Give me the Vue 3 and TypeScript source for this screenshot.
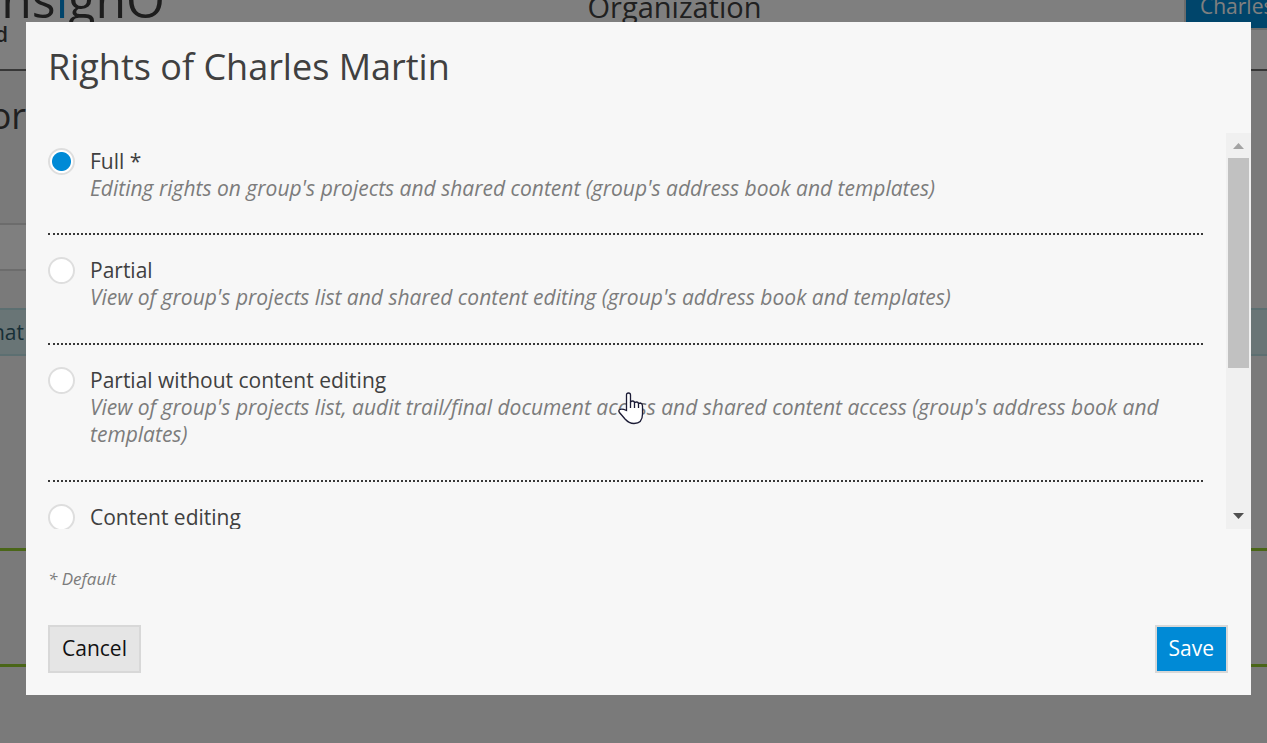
<script setup lang="ts">
import { ref } from 'vue'

interface Right {
  id: string
  label: string
  description?: string
}

const rights: Right[] = [
  { id: 'full', label: 'Full *', description: "Editing rights on group's projects and shared content (group's address book and templates)" },
  { id: 'partial', label: 'Partial', description: "View of group's projects list and shared content editing (group's address book and templates)" },
  { id: 'partial-view', label: 'Partial without content editing', description: "View of group's projects list, audit trail/final document access and shared content access (group's address book and templates)" },
  { id: 'content', label: 'Content editing' },
]

const selected = ref('full')
</script>

<template>
  <div class="screen">
    <div class="page">
      <header class="topbar">
        <div class="brand">
          <div class="logo">ns<span class="accent">i</span>gnO</div>
          <div class="tagline">d</div>
        </div>
        <div class="section">Organization</div>
        <button class="account" type="button">Charles</button>
      </header>
      <div class="heading">or</div>
      <div class="field"></div>
      <div class="notice"><span>hat</span></div>
      <div class="rule first"></div>
      <div class="rule"></div>
    </div>

    <div class="overlay">
      <form class="dialog" role="dialog" aria-labelledby="dialog-title" @submit.prevent>
        <h1 id="dialog-title">Rights of Charles Martin</h1>
        <div class="scroller">
          <div class="options">
            <div v-for="r in rights" :key="r.id" class="option">
              <input :id="r.id" v-model="selected" type="radio" name="right" :value="r.id" />
              <label :for="r.id">
                <span class="name">{{ r.label }}</span>
                <em v-if="r.description">{{ r.description }}</em>
              </label>
            </div>
          </div>
          <div class="scrollbar" aria-hidden="true">
            <svg class="arrow" viewBox="0 0 25 25"><path d="M7 16 L12.500 10 L18 16 Z" fill="#a3a3a3" /></svg>
            <div class="track"><div class="thumb"></div></div>
            <svg class="arrow" viewBox="0 0 25 25"><path d="M7 9 L12.500 15 L18 9 Z" fill="#505050" /></svg>
          </div>
        </div>
        <p class="note">* Default</p>
        <footer>
          <button class="btn" type="button">Cancel</button>
          <button class="btn primary" type="submit">Save</button>
        </footer>
      </form>
    </div>

    <svg class="pointer" viewBox="0 0 26 33" aria-hidden="true">
      <path d="M8.500 18 V3 Q8.500 1 10.500 1 Q12.500 1 12.500 3 V10.500 Q12.500 9 14.500 9 Q16.500 9 16.500 11 Q16.500 10 18.500 10 Q20.500 10 20.500 12 Q20.500 11 22.500 11 Q24.500 11.500 24.500 14 V22 Q24.500 31.500 16 31.500 Q11 31.500 7 27 L1.500 20.500 Q0 18.500 2 17.500 Q4 16.500 8.500 18.500 Z" fill="#fff" stroke="#1b1b35" stroke-width="1.300" />
      <path d="M12.500 10 V16 M16.500 11 V16 M20.500 12 V16" fill="none" stroke="#1b1b35" stroke-width="1.300" />
    </svg>
  </div>
</template>

<style>
body {
  margin: 0;
}
</style>

<style scoped>
.screen {
  position: relative;
  height: 100vh;
  min-height: 720px;
  overflow: hidden;
  font-family: "Open Sans", "Noto Sans", sans-serif;
  font-size: 21px;
  color: #404040;
  background: #f5f5f5;
}

.topbar {
  display: flex;
  justify-content: space-between;
  align-items: flex-start;
  box-sizing: border-box;
  height: 71px;
  overflow: hidden;
  border-bottom: 2px solid #6f6f6f;
  background: #fefefe;
}

.brand {
  width: 165px;
  height: 69px;
  display: flex;
  flex-direction: column;
}

.logo {
  display: flex;
  justify-content: flex-end;
  align-items: flex-end;
  height: 24px;
  font-size: 50px;
  line-height: 50px;
  color: #3a3a3a;
}

.accent {
  color: #0089d6;
}

.tagline {
  font-size: 21px;
  line-height: 20px;
  width: 8px;
  display: flex;
  justify-content: flex-end;
  font-weight: 600;
}

.section {
  display: flex;
  align-items: flex-end;
  height: 22px;
  font-size: 29px;
  line-height: 30px;
}

.account {
  display: flex;
  align-items: flex-end;
  width: 83px;
  height: 30px;
  padding: 0 0 10px 14px;
  overflow: hidden;
  border: 2px solid #d8d8d8;
  border-width: 0 0 2px 2px;
  background: #008ad6;
  color: #fff;
  font: inherit;
  line-height: 24px;
  box-sizing: border-box;
}

.heading {
  display: flex;
  justify-content: flex-end;
  width: 26px;
  height: 152px;
  font-size: 36px;
  line-height: 90px;
}

.field {
  box-sizing: border-box;
  width: 80%;
  height: 48px;
  border: 2px solid #d8d8d8;
  border-left: 0;
  background: #fefefe;
}

.notice {
  box-sizing: border-box;
  height: 48px;
  margin-top: 37px;
  border: 2px solid #b8dfe3;
  border-width: 2px 0;
  background: #d2eaec;
  color: #31606f;
  line-height: 44px;
}

.notice span {
  display: flex;
  justify-content: flex-end;
  width: 24px;
}

.rule {
  height: 3px;
  margin-top: 113px;
  background: #94cc30;
}

.rule.first {
  margin-top: 192px;
}

.overlay {
  position: absolute;
  inset: 0;
  padding: 22px 16px 22px 26px;
  background: rgba(0, 0, 0, 0.5);
}

.dialog {
  box-sizing: border-box;
  padding: 21px 0 22px;
  background: #f7f7f7;
}

h1 {
  margin: 0 22px 42px;
  font-size: 36px;
  line-height: 48px;
  font-weight: 400;
}

.scroller {
  display: flex;
  height: 396px;
}

.options {
  flex: 1;
  overflow: hidden;
  padding: 0 23px 0 22px;
}

.option {
  display: flex;
  align-items: flex-start;
  gap: 15px;
  padding: 15px 0 31px;
  border-bottom: 2px dotted #383838;
}

.option + .option {
  padding: 22px 0 32px;
}

.option input {
  appearance: none;
  box-sizing: border-box;
  flex: none;
  width: 27px;
  height: 27px;
  margin: 0;
  border: 2px solid #dedede;
  border-radius: 50%;
  background: #fff;
}

.option input:checked {
  background: radial-gradient(circle, #008ad6 9px, #fff 10px);
}

.name,
.option em {
  display: block;
  line-height: 27px;
}

.option em {
  color: #7c7c7c;
}

.scrollbar {
  display: flex;
  flex-direction: column;
  width: 25px;
  background: #f0f0f0;
}

.arrow {
  width: 25px;
  height: 25px;
}

.track {
  flex: 1;
  padding: 0 2px;
}

.thumb {
  height: 210px;
  background: #c1c1c1;
}

.note {
  margin: 38px 22px 34px;
  font-size: 17px;
  line-height: 24px;
  font-style: italic;
  color: #7c7c7c;
}

footer {
  display: flex;
  justify-content: space-between;
  padding: 0 23px 0 22px;
}

.btn {
  height: 48px;
  padding: 0 12px 2px;
  border: 2px solid #d8d8d8;
  background: #e5e5e5;
  color: #111;
  font: inherit;
}

.btn.primary {
  background: #008ad6;
  color: #fff;
}

.pointer {
  position: absolute;
  left: 618px;
  top: 392px;
  width: 26px;
  height: 33px;
}
</style>
